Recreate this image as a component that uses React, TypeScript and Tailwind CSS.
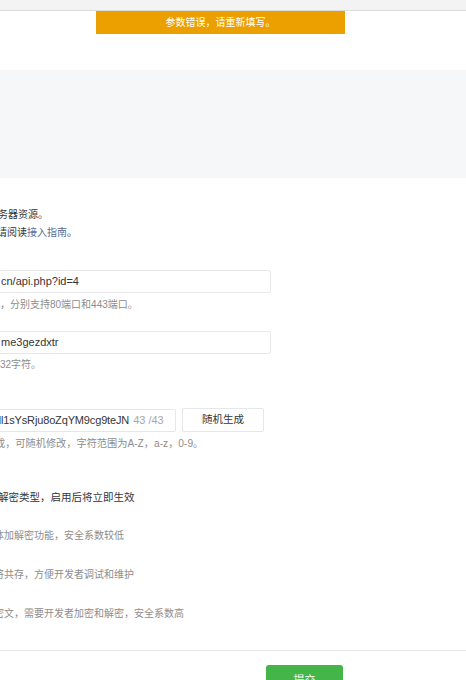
export default function App() {
  const font = { fontFamily: '"Liberation Sans", "Noto Sans CJK SC", sans-serif' };
  return (
    <div
      className="relative w-[466px] h-[680px] overflow-hidden bg-white text-[#353535]"
      style={font}
    >
      {/* top bar */}
      <div className="h-[11px] bg-[#f3f3f3] border-b border-[#dcdcdc]" />

      {/* toast */}
      <div className="absolute left-[96px] top-[11px] flex h-[23px] w-[249px] items-center justify-center bg-[#eca000] text-[10px] text-white">
        参数错误，请重新填写。
      </div>

      <div className="h-[59px]" />
      <div className="h-[108px] bg-[#f6f7f9]" />

      <div className="flex flex-col">
        <p className="mt-[28px] ml-[-2px] whitespace-nowrap text-[10px] leading-[18px]">务器资源。</p>
        <p className="ml-[-3px] whitespace-nowrap text-[10px] leading-[18px]">
          请阅读<span className="text-[#576b95]">接入指南</span>。
        </p>

        {/* URL */}
        <div className="mt-[28px] ml-[-1px] flex h-[23px] w-[272px] items-center rounded-[2px] border border-[#e7e7eb] pl-[1px] text-[11px] whitespace-nowrap">
          cn/api.php?id=4
        </div>
        <p className="mt-[3px] whitespace-nowrap text-[10px] leading-[18px] text-[#8d8d8d]">
          ，分别支持80端口和443端口。
        </p>

        {/* Token */}
        <div className="mt-[17px] ml-[-1px] flex h-[23px] w-[272px] items-center rounded-[2px] border border-[#e7e7eb] pl-[1px] text-[11px] whitespace-nowrap">
          me3gezdxtr
        </div>
        <p className="mt-[2px] whitespace-nowrap text-[10px] leading-[18px] text-[#8d8d8d]">
          32字符。
        </p>

        {/* EncodingAESKey */}
        <div className="mt-[34px] flex items-center gap-[6px]">
          <div className="ml-[-1px] flex h-[23px] w-[177px] items-center overflow-hidden rounded-[2px] border border-[#e7e7eb] text-[11px] whitespace-nowrap">
            <span className="ml-[-5px] tracking-[-0.15px]">dl1sYsRju8oZqYM9cg9teJN</span>
            <span className="ml-[4px] text-[#a8a8a8]">43 /43</span>
          </div>
          <button className="flex h-[24px] w-[82px] items-center justify-center rounded-[2px] border border-[#e4e8eb] bg-white text-[10.5px] text-[#353535]">
            随机生成
          </button>
        </div>
        <p className="mt-[3px] ml-[-5px] whitespace-nowrap text-[10.2px] leading-[18px] text-[#8d8d8d]">
          成，可随机修改，字符范围为A-Z，a-z，0-9。
        </p>

        {/* encryption type */}
        <p className="mt-[35px] ml-[-2px] whitespace-nowrap text-[10.5px] leading-[18px]">
          解密类型，启用后将立即生效
        </p>
        <p className="mt-[21px] ml-[-6px] whitespace-nowrap text-[10px] leading-[18px] text-[#8d8d8d]">
          体加解密功能，安全系数较低
        </p>
        <p className="mt-[21px] ml-[-6px] whitespace-nowrap text-[10px] leading-[18px] text-[#8d8d8d]">
          将共存，方便开发者调试和维护
        </p>
        <p className="mt-[21px] ml-[-6px] whitespace-nowrap text-[10px] leading-[18px] text-[#8d8d8d]">
          密文，需要开发者加密和解密，安全系数高
        </p>

        <div className="mt-[27px] border-t border-[#e7e7eb]" />
        <div className="mt-[14px] pl-[266px]">
          <button className="flex h-[30px] w-[77px] items-center justify-center rounded-[3px] bg-[#44b549] text-[11px] text-white">
            提交
          </button>
        </div>
      </div>
    </div>
  );
}
